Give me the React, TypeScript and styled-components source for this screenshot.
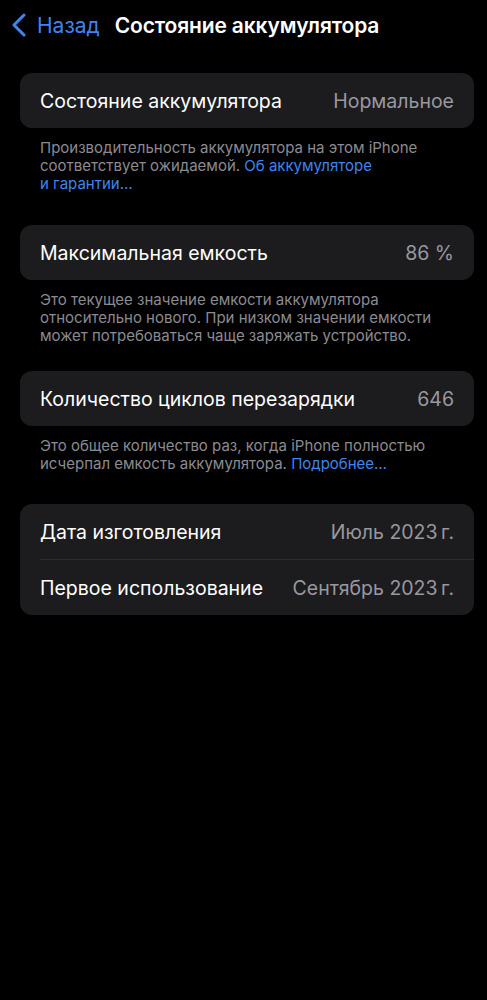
import React from "react"
import styled, { createGlobalStyle } from "styled-components"

const GlobalStyle = createGlobalStyle`
  html, body {
    margin: 0;
    padding: 0;
    background: #000;
  }
  body {
    font-family: Inter, "Noto Sans", sans-serif;
    color: #fff;
    -webkit-font-smoothing: antialiased;
  }
`

const Page = styled.div`
  width: 487px;
  min-height: 1000px;
  background: #000;
  display: flex;
  flex-direction: column;
`

const NavBar = styled.div`
  height: 50px;
  display: flex;
  align-items: center;
  padding: 0 0 0 11px;
  margin-bottom: 23px;
`

const BackButton = styled.div`
  display: flex;
  align-items: center;
  gap: 10px;
  color: #3f84f0;
  font-size: 21px;
  margin-right: 15px;
`

const Title = styled.div`
  font-size: 21px;
  font-weight: 600;
  letter-spacing: -0.15px;
`

const Content = styled.div`
  display: flex;
  flex-direction: column;
  padding: 0 13px 0 20px;
`

const Section = styled.div<{ $gap?: number }>`
  display: flex;
  flex-direction: column;
  margin-bottom: ${(p) => p.$gap ?? 32}px;
`

const Card = styled.div`
  background: #1c1c1e;
  border-radius: 12px;
  display: flex;
  flex-direction: column;
  padding-left: 20px;
`

const Row = styled.div<{ $divider?: boolean }>`
  height: 55px;
  display: flex;
  align-items: center;
  justify-content: space-between;
  padding-right: 20px;
  font-size: 19.5px;
  border-bottom: ${(p) => (p.$divider ? "1px solid #2e2e31" : "none")};
`

const Label = styled.span`
  color: #fff;
`

const Value = styled.span`
  color: #98989e;
`

const Footnote = styled.div`
  padding: 11px 20px 0 20px;
  font-size: 15px;
  line-height: 18px;
  color: #8b8b91;
`

const Link = styled.span`
  color: #3f84f0;
`

const Chevron = () => (
  <svg width="16" height="24" viewBox="0 0 16 24">
    <path
      d="M13 2 L3 12 L13 22"
      fill="none"
      stroke="#3f84f0"
      strokeWidth="3"
      strokeLinecap="round"
      strokeLinejoin="round"
    />
  </svg>
)

export default function App() {
  return (
    <Page>
      <GlobalStyle />
      <NavBar>
        <BackButton>
          <Chevron />
          Назад
        </BackButton>
        <Title>Состояние аккумулятора</Title>
      </NavBar>
      <Content>
        <Section $gap={32}>
          <Card>
            <Row>
              <Label>Состояние аккумулятора</Label>
              <Value>Нормальное</Value>
            </Row>
          </Card>
          <Footnote>
            Производительность аккумулятора на этом iPhone
            <br />
            соответствует ожидаемой. <Link>Об аккумуляторе</Link>
            <br />
            <Link>и гарантии…</Link>
          </Footnote>
        </Section>
        <Section $gap={26}>
          <Card>
            <Row>
              <Label>Максимальная емкость</Label>
              <Value>86 %</Value>
            </Row>
          </Card>
          <Footnote>
            Это текущее значение емкости аккумулятора
            <br />
            относительно нового. При низком значении емкости
            <br />
            может потребоваться чаще заряжать устройство.
          </Footnote>
        </Section>
        <Section $gap={31}>
          <Card>
            <Row>
              <Label>Количество циклов перезарядки</Label>
              <Value>646</Value>
            </Row>
          </Card>
          <Footnote>
            Это общее количество раз, когда iPhone полностью
            <br />
            исчерпал емкость аккумулятора. <Link>Подробнее…</Link>
          </Footnote>
        </Section>
        <Section>
          <Card>
            <Row $divider>
              <Label>Дата изготовления</Label>
              <Value>Июль 2023{"\u2009"}г.</Value>
            </Row>
            <Row>
              <Label>Первое использование</Label>
              <Value>Сентябрь 2023{"\u2009"}г.</Value>
            </Row>
          </Card>
        </Section>
      </Content>
    </Page>
  )
}
